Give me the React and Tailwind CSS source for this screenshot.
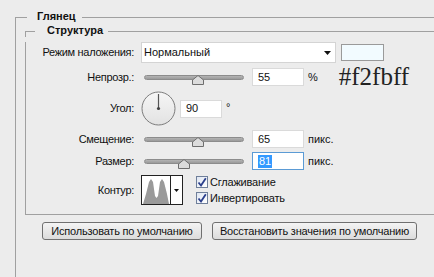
import React from "react";

const FONT = { fontFamily: '"Liberation Sans", Arial, sans-serif' };

function Slider({ pos }) {
  return (
    <div className="relative w-[100px] h-[10px] ml-[3px]">
      <div className="h-[5px] rounded-full border border-[#8c8c8c] bg-gradient-to-b from-[#b4b4b4] to-[#9a9a9a]" />
      <svg
        className="absolute top-0"
        style={{ left: pos - 6 }}
        width="12"
        height="10"
        viewBox="0 0 12 10"
      >
        <path
          d="M6 0.5 L11.5 5 L11.5 9.5 L0.5 9.5 L0.5 5 Z"
          fill="#dcdcdc"
          stroke="#6e6e6e"
          strokeWidth="1"
        />
      </svg>
    </div>
  );
}

function NumInput({ value, w = "w-[52px]", active }) {
  return (
    <div
      className={`${w} h-[18px] bg-white border flex items-center pl-[5px] text-[11px] ${
        active ? "border-[#5b9bd5]" : "border-[#dadada]"
      }`}
    >
      {active ? (
        <span className="bg-[#3399ff] text-white leading-[13px] px-[1px]">{value}</span>
      ) : (
        <span className="leading-[13px]">{value}</span>
      )}
    </div>
  );
}

function Row({ label, className = "", children }) {
  return (
    <div className={`flex items-center ${className}`}>
      <div className="w-[109px] text-right text-[11px] tracking-[-0.3px] pr-[1px]">{label}</div>
      <div className="flex items-center ml-[6px]">{children}</div>
    </div>
  );
}

function Check({ label }) {
  return (
    <div className="flex items-center h-[16px]">
      <div className="w-[12px] h-[12px] border border-[#6f7f9a] bg-gradient-to-br from-[#dfe6f2] to-[#ffffff] flex items-center justify-center">
        <svg width="10" height="10" viewBox="0 0 10 10">
          <path d="M1.5 5.5 L4 8.5 L8.8 1.2" fill="none" stroke="#2b3f8c" strokeWidth="1.8" />
        </svg>
      </div>
      <span className="ml-[2px] text-[11px] tracking-[-0.2px]">{label}</span>
    </div>
  );
}

function Btn({ children, w }) {
  return (
    <div
      className={`${w} h-[18px] rounded-[3px] border border-[#707070] bg-gradient-to-b from-[#f4f4f4] to-[#dcdcdc] flex items-center justify-center text-[11px] tracking-[-0.2px] text-[#111]`}
    >
      {children}
    </div>
  );
}

export default function App() {
  return (
    <div
      className="w-[434px] h-[277px] overflow-hidden bg-[#ececec] text-[#111] pt-[10px] pl-[15px]"
      style={FONT}
    >
      <div className="w-[440px]">
        {/* Глянец header */}
        <div className="flex h-[13px]">
          <div className="w-[12px] shrink-0 mt-[7px] border-t border-l border-[#a0a0a0]" />
          <div className="w-[55px] shrink-0 pl-[10px] text-[11px] font-bold leading-[13px]">Глянец</div>
          <div className="flex-1 mt-[7px] border-t border-[#a0a0a0]" />
        </div>

        <div className="border-l border-[#a0a0a0] h-[260px] pl-[9px] pt-[1px]">
          {/* Структура header */}
          <div className="flex h-[13px]">
            <div className="w-[10px] shrink-0 mt-[7px] border-t border-l border-[#a0a0a0]" />
            <div className="w-[73px] shrink-0 pl-[12px] text-[11px] font-bold leading-[13px]">Структура</div>
            <div className="flex-1 mt-[7px] border-t border-[#a0a0a0]" />
          </div>

          <div className="border-l border-b border-[#a0a0a0] pb-[8px]">
            <Row label="Режим наложения:" className="mt-[5px]">
              <div className="w-[195px] h-[21px] bg-white border border-[#d4d4d4] flex items-center justify-between pl-[2px] pr-[4px] text-[11px]">
                <span>Нормальный</span>
                <svg width="7" height="4" viewBox="0 0 7 4">
                  <path d="M0 0 L7 0 L3.5 4 Z" fill="#111" />
                </svg>
              </div>
              <div className="ml-[5px] w-[43px] h-[17px] bg-[#f2fbff] border border-[#9a9a9a]" />
            </Row>

            <Row label="Непрозр.:" className="mt-[5px]">
              <div className="pt-[5px]">
                <Slider pos={54} />
              </div>
              <div className="ml-[8px]">
                <NumInput value="55" />
              </div>
              <span className="ml-[4px] text-[11px]">%</span>
              <span
                className="ml-[21px] text-[25px] leading-[16px] text-[#222]"
                style={{ fontFamily: '"Liberation Serif", "Times New Roman", serif' }}
              >
                #f2fbff
              </span>
            </Row>

            <Row label="Угол:" className="mt-[5px]">
              <svg width="35" height="35" viewBox="0 0 35 35">
                <defs>
                  <linearGradient id="dial" x1="0" y1="0" x2="0" y2="1">
                    <stop offset="0" stopColor="#f6f6f6" />
                    <stop offset="1" stopColor="#e2e2e2" />
                  </linearGradient>
                </defs>
                <circle cx="17.5" cy="17.5" r="16.5" fill="url(#dial)" stroke="#7c7c7c" />
                <line x1="17.5" y1="3" x2="17.5" y2="17.5" stroke="#555" strokeWidth="1.2" />
                <circle cx="17.5" cy="17.5" r="1.6" fill="#444" />
              </svg>
              <div className="ml-[4px]">
                <NumInput value="90" w="w-[42px]" />
              </div>
              <span className="ml-[4px] text-[11px] self-start mt-[8px]">°</span>
            </Row>

            <Row label="Смещение:" className="mt-[4px]">
              <div className="pt-[5px]">
                <Slider pos={54} />
              </div>
              <div className="ml-[8px]">
                <NumInput value="65" />
              </div>
              <span className="ml-[4px] text-[11px]">пикс.</span>
            </Row>

            <Row label="Размер:" className="mt-[4px]">
              <div className="pt-[5px]">
                <Slider pos={40} />
              </div>
              <div className="ml-[8px]">
                <NumInput value="81" active />
              </div>
              <span className="ml-[4px] text-[11px]">пикс.</span>
            </Row>

            <Row label="Контур:" className="mt-[4px]">
              <div className="w-[42px] h-[30px] bg-white border border-[#222] flex">
                <svg width="28" height="28" viewBox="0 0 28 28">
                  <path
                    d="M1 28 L4 18 L7 6 L9 3 L11 6 L13 20 L14.5 22 L16 20 L18 6 L20 3 L22 6 L25 18 L27 28 Z"
                    fill="#9a9a9a"
                  />
                </svg>
                <div className="flex-1 border-l border-[#222] flex items-center justify-center">
                  <svg width="5" height="3" viewBox="0 0 5 3">
                    <path d="M0 0 L5 0 L2.5 3 Z" fill="#111" />
                  </svg>
                </div>
              </div>
              <div className="ml-[13px] flex flex-col">
                <Check label="Сглаживание" />
                <Check label="Инвертировать" />
              </div>
            </Row>
          </div>

          <div className="flex mt-[7px] ml-[17px] gap-[10px]">
            <Btn w="w-[160px]">Использовать по умолчанию</Btn>
            <Btn w="w-[205px]">Восстановить значения по умолчанию</Btn>
          </div>
        </div>
      </div>
    </div>
  );
}
